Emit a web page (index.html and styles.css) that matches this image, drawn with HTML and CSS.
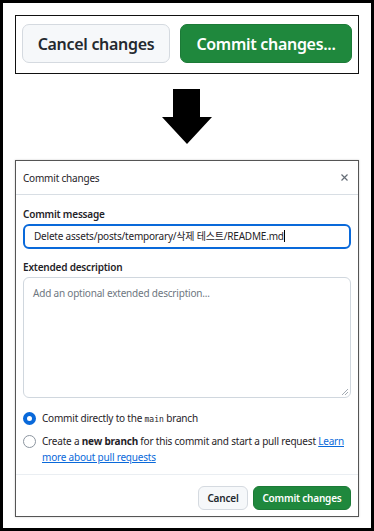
FILE: index.html
```html
<!DOCTYPE html>
<html lang="en">
<head>
	<meta charset="UTF-8">
	<title>Commit changes</title>
	<link rel="stylesheet" href="styles.css">
</head>
<body>
	<div class="frame">
		<div class="toolbar">
			<button class="btn btn-big">Cancel changes</button>
			<button class="btn btn-big btn-primary">Commit changes...</button>
		</div>

		<svg class="arrow" width="50" height="55" viewBox="0 0 50 55">
			<path d="M11 0 H38 V28 H50 L25 55 L0 28 H11 Z" fill="#000"/>
		</svg>

		<div class="dialog">
			<div class="dialog-head">
				<span>Commit changes</span>
				<svg class="close" width="7" height="7" viewBox="0 0 7 7">
					<path d="M0.5 0.5 L6.5 6.5 M6.5 0.5 L0.5 6.5" stroke="#656d76" stroke-width="1.2"/>
				</svg>
			</div>
			<div class="dialog-body">
				<label class="label">Commit message</label>
				<div class="input">Delete assets/posts/temporary/삭제 테스트/README.md<span class="caret"></span></div>

				<label class="label">Extended description</label>
				<div class="textarea">
					<span class="placeholder">Add an optional extended description...</span>
					<svg class="grip" width="6" height="6" viewBox="0 0 6 6">
						<path d="M6 0 L0 6 M6 3 L3 6" stroke="#8c959f" stroke-width="0.8"/>
					</svg>
				</div>

				<div class="choice">
					<span class="radio checked"></span>
					<span>Commit directly to the <code>main</code> branch</span>
				</div>
				<div class="choice">
					<span class="radio"></span>
					<span>Create a <b>new branch</b> for this commit and start a pull request <a href="javascript:;">Learn more about pull requests</a></span>
				</div>
			</div>
			<div class="dialog-foot">
				<button class="btn btn-small">Cancel</button>
				<button class="btn btn-small btn-primary">Commit changes</button>
			</div>
		</div>
	</div>
</body>
</html>
```

FILE: styles.css
```css
* {
	margin: 0;
	padding: 0;
	box-sizing: border-box;
}
body {
	width: 374px;
	height: 531px;
	font-family: "Noto Sans", "Noto Sans CJK KR", sans-serif;
	color: #1f2328;
	background: #fff;
}
.frame {
	height: 531px;
	border: 3px solid #000;
	padding: 12px 12px 0;
	display: flex;
	flex-direction: column;
	align-items: center;
}

/* buttons */
.btn {
	font-family: inherit;
	font-weight: 600;
	color: #24292f;
	background: #f6f8fa;
	border: 1px solid #d5dae0;
	border-radius: 6px;
	cursor: pointer;
}
.btn-primary {
	color: #fff;
	background: #1f883d;
	border-color: #1c7a37;
}
.btn-big {
	height: 39px;
	font-size: 16px;
	letter-spacing: -0.3px;
	border-radius: 7px;
}

.toolbar {
	width: 344px;
	height: 59px;
	border: 1px solid #111;
	padding: 8px 6px 0;
	display: flex;
	gap: 10px;
}
.toolbar .btn:first-child {
	width: 148px;
}
.toolbar .btn-primary {
	width: 172px;
}

.arrow {
	display: block;
	margin-top: 15px;
}

/* dialog */
.dialog {
	width: 344px;
	height: 357px;
	margin-top: 16px;
	border: 1px solid #555;
	box-shadow: 0 0 2px rgba(0, 0, 0, .2);
	display: flex;
	flex-direction: column;
	font-size: 10px;
	letter-spacing: -0.2px;
}
.dialog-head {
	height: 34px;
	padding: 0 10px 0 7px;
	border-bottom: 1px solid #d8dee4;
	display: flex;
	align-items: center;
	justify-content: space-between;
}
.close {
	display: block;
}
.dialog-body {
	height: 280px;
	padding: 12px 7px 0;
	border-bottom: 1px solid #eaeef2;
}
.label {
	display: block;
	font-weight: 600;
	line-height: 14px;
	margin-bottom: 3px;
}
.label + .textarea {
	margin-top: 1px;
}
.input {
	height: 25px;
	border: 2px solid #0969da;
	border-radius: 6px;
	padding: 0 9px;
	line-height: 21px;
	white-space: nowrap;
	margin-bottom: 11px;
}
.caret {
	display: inline-block;
	width: 1px;
	height: 12px;
	background: #000;
	vertical-align: -2px;
}
.textarea {
	position: relative;
	height: 121px;
	border: 1px solid #d0d7de;
	border-radius: 6px;
	padding: 7px 9px;
	line-height: 16px;
	margin-bottom: 12px;
}
.placeholder {
	color: #6e7781;
}
.grip {
	position: absolute;
	right: 2px;
	bottom: 2px;
}
.choice {
	display: flex;
	align-items: flex-start;
	gap: 6px;
	line-height: 16px;
	margin-bottom: 5px;
}
.radio {
	flex: none;
	width: 13px;
	height: 13px;
	margin-top: 1.5px;
	border: 1px solid #8c959f;
	border-radius: 50%;
}
.radio.checked {
	border: 4px solid #0969da;
}
code {
	font-family: "DejaVu Sans Mono", monospace;
	font-size: 8px;
	letter-spacing: 0;
}
a {
	color: #0969da;
	text-decoration: underline;
}
.dialog-foot {
	flex: 1;
	padding: 11px 7px 0;
	display: flex;
	align-items: flex-start;
	justify-content: flex-end;
	gap: 5px;
}
.btn-small {
	height: 24px;
	font-size: 10px;
	letter-spacing: -0.2px;
	padding: 0;
}
.dialog-foot .btn:first-child {
	width: 50px;
}
.dialog-foot .btn-primary {
	width: 98px;
}
```
